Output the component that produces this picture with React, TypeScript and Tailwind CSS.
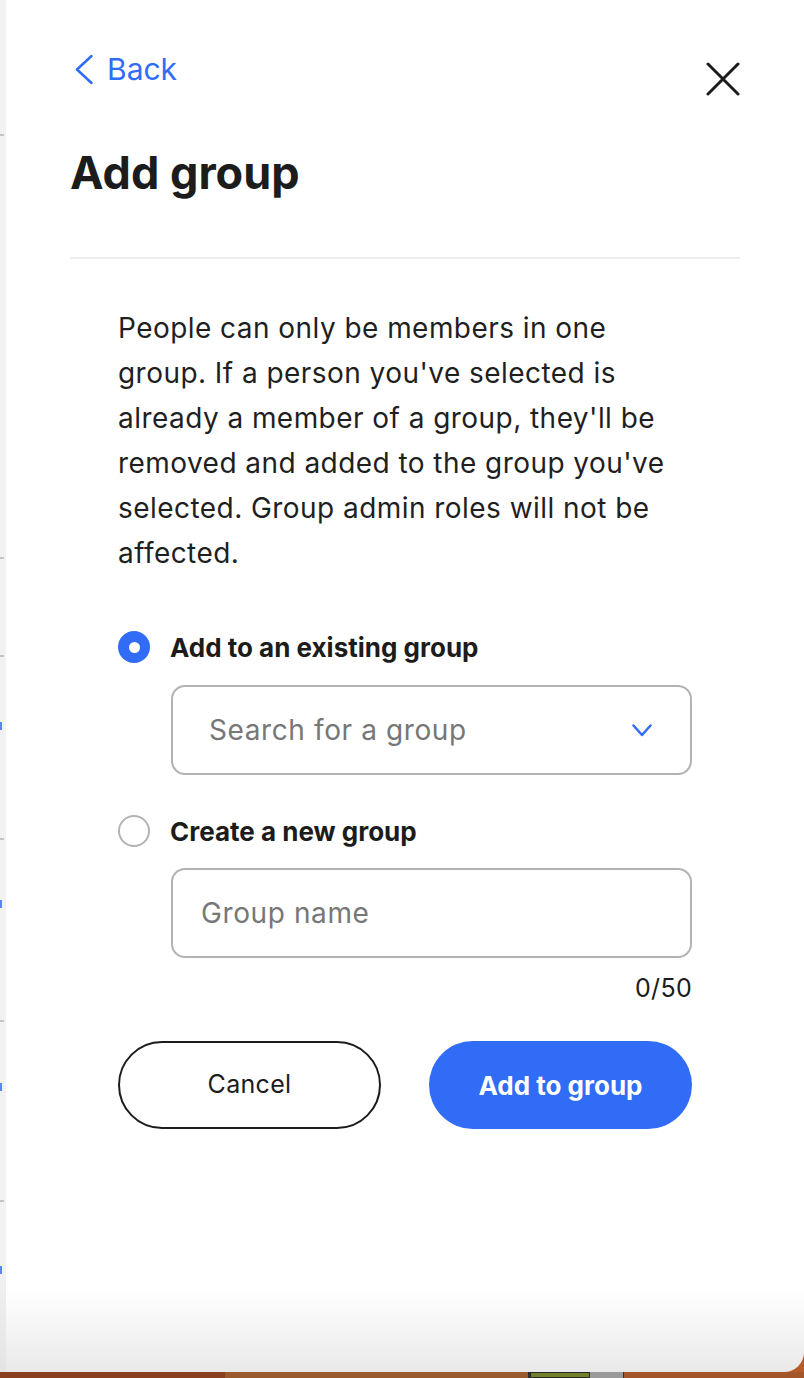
import React from "react";

const font = { fontFamily: "Inter, 'Liberation Sans', sans-serif" };

function LeftStrip() {
  const ticks = [134, 557, 655, 838, 1020, 1200];
  const blues = [726, 904, 1087, 1270];
  return (
    <div className="relative w-[6px] h-full bg-[linear-gradient(180deg,#f2f2f2_0%,#f2f2f2_92%,#e4e4e4_100%)]">
      {ticks.map((t) => (
        <div key={t} className="absolute left-0 w-[4px] h-[2px] bg-[#c4c4c4]" style={{ top: t }} />
      ))}
      {blues.map((t) => (
        <div key={t} className="absolute left-0 w-[2px] h-[8px] bg-[#5a86ef]" style={{ top: t - 4 }} />
      ))}
    </div>
  );
}

export default function App() {
  return (
    <div className="w-[804px] h-[1378px] flex flex-col bg-[#b85b2b] overflow-hidden" style={font}>
      <div className="flex h-[1372px]">
        <LeftStrip />
        <div className="flex-1 h-full rounded-br-[20px] bg-[linear-gradient(180deg,#ffffff_0%,#ffffff_94%,#e9e9e9_100%)] px-[64px] flex flex-col">
          {/* header */}
          <div className="flex justify-between items-start pt-[52px]">
            <div className="flex items-center gap-[14px] ml-[5px] text-[#306cf5] text-[30px] leading-[34px]">
              <svg width="18" height="31" viewBox="0 0 18 31" fill="none">
                <path d="M16.5 2 L2 15.5 L16.5 29" stroke="#306cf5" strokeWidth="2.5" strokeLinecap="round" strokeLinejoin="round" />
              </svg>
              <span>Back</span>
            </div>
            <svg className="mt-[10px]" width="34" height="34" viewBox="0 0 34 34" fill="none">
              <path d="M2 2 L32 32 M32 2 L2 32" stroke="#1c1c1c" strokeWidth="3" strokeLinecap="round" />
            </svg>
          </div>
          <h1 className="mt-[55px] text-[45px] leading-[44px] font-bold text-[#1c1c1c]">Add group</h1>
          <div className="mt-[62px] h-[2px] bg-[#eeeeee]" />

          <div className="px-[48px]">
            <p className="mt-[47px] text-[28px] leading-[45px] tracking-[0.45px] text-[#1f1f1f]">
              <span className="block whitespace-nowrap">People can only be members in one</span>
              <span className="block whitespace-nowrap">group. If a person you've selected is</span>
              <span className="block whitespace-nowrap">already a member of a group, they'll be</span>
              <span className="block whitespace-nowrap">removed and added to the group you've</span>
              <span className="block whitespace-nowrap">selected. Group admin roles will not be</span>
              <span className="block whitespace-nowrap">affected.</span>
            </p>

            {/* option 1 */}
            <div className="mt-[55px] flex items-center gap-[20px] h-[32px]">
              <div className="w-[32px] h-[32px] rounded-full bg-[#306cf5] flex items-center justify-center">
                <div className="w-[11px] h-[11px] rounded-full bg-white" />
              </div>
              <span className="text-[26px] font-bold text-[#1c1c1c]">Add to an existing group</span>
            </div>
            <div className="ml-[53px] mt-[22px] h-[90px] border-2 border-[#b3b3b3] rounded-[14px] flex items-center justify-between pl-[36px] pr-[38px]">
              <span className="text-[28px] tracking-[0.6px] text-[#777777]">Search for a group</span>
              <svg width="20" height="13" viewBox="0 0 20 13" fill="none">
                <path d="M1.5 1.5 L10 11 L18.5 1.5" stroke="#306cf5" strokeWidth="2.5" strokeLinecap="round" strokeLinejoin="round" />
              </svg>
            </div>

            {/* option 2 */}
            <div className="mt-[40px] flex items-center gap-[20px] h-[32px]">
              <div className="w-[32px] h-[32px] rounded-full border-2 border-[#b3b3b3] bg-white" />
              <span className="text-[26px] font-bold text-[#1c1c1c]">Create a new group</span>
            </div>
            <div className="ml-[53px] mt-[21px] h-[90px] border-2 border-[#b3b3b3] rounded-[14px] flex items-center pl-[28px]">
              <span className="text-[28px] tracking-[0.6px] text-[#777777]">Group name</span>
            </div>
            <div className="mt-[15px] text-right text-[25px] leading-[30px] tracking-[0.3px] text-[#1c1c1c]">0/50</div>

            {/* buttons */}
            <div className="mt-[38px] flex gap-[48px]">
              <button className="w-[263px] h-[88px] rounded-full border-2 border-[#1c1c1c] bg-white text-[25px] tracking-[0.3px] text-[#1c1c1c]">
                Cancel
              </button>
              <button className="w-[263px] h-[88px] rounded-full bg-[#306cf5] text-[26px] font-bold text-white">
                Add to group
              </button>
            </div>
          </div>
        </div>
      </div>
      <div className="flex h-[6px]">
        <div className="w-[225px] bg-[#8a3f1f]" />
        <div className="w-[303px] bg-[#9a5a2c]" />
        <div className="w-[62px] bg-[#2a2a2a] p-[1px] pl-[3px]"><div className="h-full bg-[#6f7f2a]" /></div>
        <div className="w-[34px] bg-[#9a9a9a] border-r border-[#333]" />
        <div className="flex-1 bg-[#a5552a]" />
      </div>
    </div>
  );
}
